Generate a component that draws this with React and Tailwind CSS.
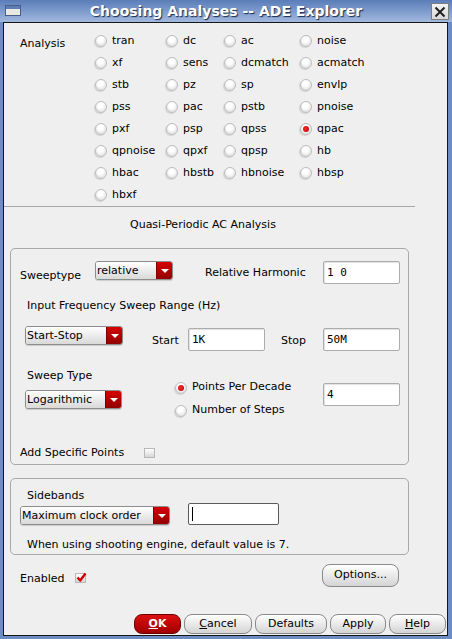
const Radio = ({ checked }) => (
    <span className="relative inline-block w-[12px] h-[12px] shrink-0 rounded-full border border-[#bdbdbd] bg-[radial-gradient(circle_at_45%_35%,#ffffff_30%,#d2d2d2)] shadow-[-1px_1px_1px_rgba(0,0,0,0.12)]">
        {checked && <span className="absolute left-[2px] top-[2px] w-[6px] h-[6px] rounded-full bg-[radial-gradient(circle_at_40%_40%,#ff2a2a,#b00000)]" />}
    </span>
);

const Combo = ({ label, w }) => (
    <div className={`flex h-[19px] ${w} rounded-[3px] border border-[#8c8c8c] overflow-hidden shadow-[0_1px_1px_rgba(0,0,0,0.15)]`}>
        <div className="flex-1 bg-gradient-to-b from-white to-[#d9d9d9] pl-[1px] text-[11px] leading-[17px] whitespace-nowrap">{label}</div>
        <div className="w-[16px] bg-gradient-to-b from-[#d80000] to-[#920000] flex items-center justify-center border-l border-[#7a0000]">
            <span className="w-0 h-0 border-l-[4px] border-r-[4px] border-t-[4px] border-l-transparent border-r-transparent border-t-white" />
        </div>
    </div>
);

const Field = ({ value, w, className = '' }) => (
    <div className={`h-[23px] ${w} ${className} bg-white border border-[#acacac] rounded-[2px] shadow-[inset_1px_1px_1px_rgba(0,0,0,0.12)] font-['DejaVu_Sans_Mono',monospace] text-[11px] leading-[21px] pl-[3px] whitespace-pre`}>
        {value}
    </div>
);

const Check = ({ checked, className = '' }) => (
    <span className={`relative inline-block w-[11px] h-[10px] border border-[#b8b8b8] bg-gradient-to-b from-white to-[#d6d6d6] ${className}`}>
        {checked && (
            <svg className="absolute left-[0px] top-[-2px]" width="11" height="11" viewBox="0 0 11 11">
                <path d="M1.5 5.5 L4.2 8.5 L9.5 1.5" fill="none" stroke="#d00000" strokeWidth="2.4" strokeLinejoin="round" />
            </svg>
        )}
    </span>
);

const Btn = ({ children, w, red }) => (
    <div className={`h-[20px] ${w} rounded-[8px] flex items-center justify-center text-[11px] ${red
        ? 'bg-gradient-to-b from-[#dd1010] to-[#a00000] border border-[#6e0000] text-white font-bold'
        : 'bg-gradient-to-b from-white to-[#d4d4d4] border border-[#8a8a8a]'
        }`}>
        {children}
    </div>
);

const analyses = [
    ['tran', 'dc', 'ac', 'noise'],
    ['xf', 'sens', 'dcmatch', 'acmatch'],
    ['stb', 'pz', 'sp', 'envlp'],
    ['pss', 'pac', 'pstb', 'pnoise'],
    ['pxf', 'psp', 'qpss', 'qpac'],
    ['qpnoise', 'qpxf', 'qpsp', 'hb'],
    ['hbac', 'hbstb', 'hbnoise', 'hbsp'],
    ['hbxf'],
];

export default function App() {
    return (
        <div className="w-[452px] h-[639px] bg-[#6b8cc4] flex flex-col font-['DejaVu_Sans',sans-serif] text-[11px] text-black overflow-hidden">
            {/* title bar */}
            <div className="h-[22px] shrink-0 relative flex items-center justify-center bg-gradient-to-b from-[#5a7db9] to-[#a2b9de]">
                <div className="absolute left-[5px] top-[5px] w-[16px] h-[11px] border border-[#4a5f86] bg-[#e9e9e1]">
                    <div className="h-[3px] bg-[#5d7db5]" />
                </div>
                <span className="text-white font-bold text-[14px] leading-[22px] [text-shadow:1px_1px_1px_#1d2b4a]">Choosing Analyses -- ADE Explorer</span>
                <div className="absolute right-[3px] top-[3px] w-[18px] h-[17px] bg-gradient-to-b from-[#f4f4f4] to-[#d8d8d8] border border-[#7d7d7d] flex items-center justify-center">
                    <svg width="12" height="12" viewBox="0 0 12 12">
                        <path d="M1.5 1.5 L10.5 10.5 M10.5 1.5 L1.5 10.5" stroke="#202020" strokeWidth="2" />
                    </svg>
                </div>
            </div>

            <div className="flex-1 ml-[3px] mr-[4px] mb-[3px] border border-[#161616] bg-[#efefef] flex flex-col">
                {/* analysis grid */}
                <div className="flex pt-[6px]">
                    <div className="w-[91px] pl-[16px] pt-[4px] leading-[22px]">Analysis</div>
                    <div className="grid grid-cols-[71px_58px_76px_80px] pt-[1px]">
                        {analyses.flat().map((a) => (
                            <div key={a} className="h-[22px] flex items-center gap-[5px]">
                                <Radio checked={a === 'qpac'} />
                                <span>{a}</span>
                            </div>
                        ))}
                    </div>
                </div>
                <div className="h-px w-[411px] bg-[#a8a8a8]" />
                <div className="h-[36px] flex items-center pl-[126px] pt-[1px]">Quasi-Periodic AC Analysis</div>

                {/* sweep group */}
                <div className="mt-[5px] ml-[6px] w-[399px] h-[217px] rounded-[5px] border border-[#a9a9a9] flex flex-col">
                    <div className="mt-[12px] flex items-start h-[23px]">
                        <div className="w-[84px] pl-[9px] mt-[8px] leading-[14px]">Sweeptype</div>
                        <Combo label="relative" w="w-[78px]" />
                        <div className="ml-[32px] w-[118px] mt-[5px] leading-[14px]">Relative Harmonic</div>
                        <Field value="1 0" w="w-[77px]" />
                    </div>
                    <div className="mt-[15px] pl-[16px] leading-[14px]">Input Frequency Sweep Range (Hz)</div>
                    <div className="mt-[13px] flex items-start">
                        <div className="ml-[14px]"><Combo label="Start-Stop" w="w-[98px]" /></div>
                        <div className="ml-[29px] w-[36px] mt-[8px] leading-[14px]">Start</div>
                        <Field value="1K" w="w-[77px]" className="mt-[2px]" />
                        <div className="ml-[16px] w-[42px] mt-[8px] leading-[14px]">Stop</div>
                        <Field value="50M" w="w-[77px]" className="mt-[2px]" />
                    </div>
                    <div className="mt-[16px] flex items-start">
                        <div className="ml-[14px] w-[97px] flex flex-col">
                            <div className="pl-[2px] pt-[2px] leading-[14px]">Sweep Type</div>
                            <div className="mt-[7px]"><Combo label="Logarithmic" w="w-[97px]" /></div>
                        </div>
                        <div className="ml-[53px] w-[148px] pt-[9px] flex flex-col">
                            <div className="h-[23px] flex items-center gap-[5px]"><Radio checked /><span>Points Per Decade</span></div>
                            <div className="h-[23px] flex items-center gap-[5px]"><Radio /><span>Number of Steps</span></div>
                        </div>
                        <Field value="4" w="w-[77px]" className="mt-[16px]" />
                    </div>
                    <div className="mt-[24px] flex items-center leading-[14px]">
                        <div className="w-[133px] pl-[9px]">Add Specific Points</div>
                        <Check className="-mt-[1px]" />
                    </div>
                </div>

                {/* sidebands group */}
                <div className="mt-[13px] ml-[6px] w-[399px] h-[77px] rounded-[5px] border border-[#a9a9a9] flex flex-col">
                    <div className="mt-[10px] pl-[16px] leading-[14px]">Sidebands</div>
                    <div className="flex items-start">
                        <div className="ml-[9px] mt-[3px]"><Combo label="Maximum clock order" w="w-[150px]" /></div>
                        <div className="ml-[18px] w-[91px] h-[22px] bg-white border border-[#5a5a5a] rounded-[2px] flex items-center pl-[3px]">
                            <span className="w-px h-[14px] bg-black" />
                        </div>
                    </div>
                    <div className="mt-[13px] pl-[16px] leading-[14px]">When using shooting engine, default value is 7.</div>
                </div>

                <div className="mt-[9px] flex items-start h-[23px]">
                    <div className="w-[71px] pl-[16px] mt-[8px] leading-[14px]">Enabled</div>
                    <Check checked className="mt-[9px]" />
                    <div className="ml-auto mr-[48px]">
                        <div className="h-[23px] w-[77px] rounded-[8px] flex items-center justify-center bg-gradient-to-b from-white to-[#d4d4d4] border border-[#8a8a8a]">Options...</div>
                    </div>
                </div>

                <div className="mt-[27px] flex justify-end gap-[3px] pr-[1px]">
                    <Btn w="w-[47px]" red><span className="underline">O</span>K</Btn>
                    <Btn w="w-[68px]"><span className="underline">C</span>ancel</Btn>
                    <Btn w="w-[72px]">Defaults</Btn>
                    <Btn w="w-[56px]">Apply</Btn>
                    <Btn w="w-[57px]"><span className="underline">H</span>elp</Btn>
                </div>
            </div>
        </div>
    );
}
